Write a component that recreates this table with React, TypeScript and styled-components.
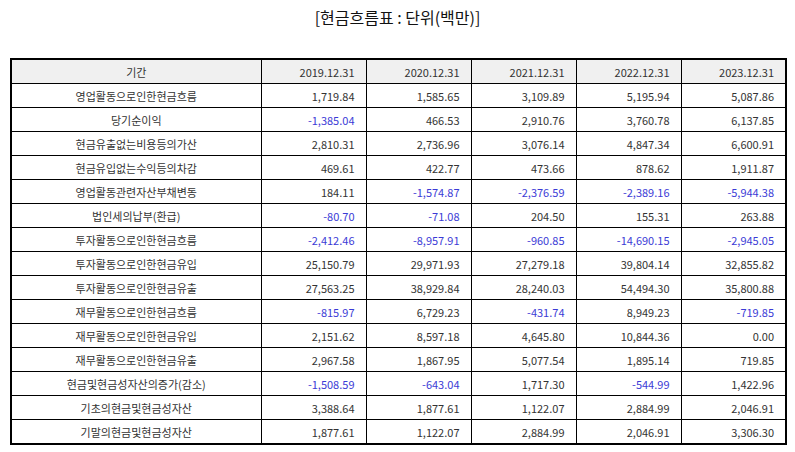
import React from "react";
import styled, { createGlobalStyle } from "styled-components";

const GlobalStyle = createGlobalStyle`
  html, body {
    margin: 0;
    padding: 0;
    background: #fff;
  }
  body {
    font-family: "Noto Sans CJK KR", "Noto Sans", sans-serif;
    color: #222;
  }
`;

const Page = styled.div`
  width: 795px;
  height: 452px;
  padding: 0 10px;
  box-sizing: border-box;
`;

const Title = styled.h2`
  margin: 0;
  height: 58px;
  padding-top: 5px;
  box-sizing: border-box;
  text-align: center;
  font-size: 16px;
  font-weight: 400;
  line-height: 24px;
  color: #111;
`;

const Table = styled.table`
  width: 775px;
  border-collapse: collapse;
  table-layout: fixed;
  font-size: 11px;
  color: #333;
  border: 2px solid #000;
`;

const Col = styled.col<{ $wide?: boolean }>`
  width: ${({ $wide }) => ($wide ? "250px" : "105px")};
`;

const HeadCell = styled.th<{ $label?: boolean }>`
  height: 23px;
  padding: 0 11px;
  border: 1.5px solid #000;
  background: #f0f0f0;
  font-weight: 400;
  text-align: ${({ $label }) => ($label ? "center" : "right")};
  white-space: nowrap;
  line-height: 20px;
`;

const Cell = styled.td<{ $label?: boolean; $neg?: boolean }>`
  height: 23px;
  padding: 0 11px;
  border: 1.5px solid #000;
  background: #fff;
  text-align: ${({ $label }) => ($label ? "center" : "right")};
  color: ${({ $neg }) => ($neg ? "#3b3bd6" : "#333")};
  white-space: nowrap;
  line-height: 20px;
`;

const years = ["2019.12.31", "2020.12.31", "2021.12.31", "2022.12.31", "2023.12.31"];

const rows: [string, string[]][] = [
  ["영업활동으로인한현금흐름", ["1,719.84", "1,585.65", "3,109.89", "5,195.94", "5,087.86"]],
  ["당기순이익", ["-1,385.04", "466.53", "2,910.76", "3,760.78", "6,137.85"]],
  ["현금유출없는비용등의가산", ["2,810.31", "2,736.96", "3,076.14", "4,847.34", "6,600.91"]],
  ["현금유입없는수익등의차감", ["469.61", "422.77", "473.66", "878.62", "1,911.87"]],
  ["영업활동관련자산부채변동", ["184.11", "-1,574.87", "-2,376.59", "-2,389.16", "-5,944.38"]],
  ["법인세의납부(환급)", ["-80.70", "-71.08", "204.50", "155.31", "263.88"]],
  ["투자활동으로인한현금흐름", ["-2,412.46", "-8,957.91", "-960.85", "-14,690.15", "-2,945.05"]],
  ["투자활동으로인한현금유입", ["25,150.79", "29,971.93", "27,279.18", "39,804.14", "32,855.82"]],
  ["투자활동으로인한현금유출", ["27,563.25", "38,929.84", "28,240.03", "54,494.30", "35,800.88"]],
  ["재무활동으로인한현금흐름", ["-815.97", "6,729.23", "-431.74", "8,949.23", "-719.85"]],
  ["재무활동으로인한현금유입", ["2,151.62", "8,597.18", "4,645.80", "10,844.36", "0.00"]],
  ["재무활동으로인한현금유출", ["2,967.58", "1,867.95", "5,077.54", "1,895.14", "719.85"]],
  ["현금및현금성자산의증가(감소)", ["-1,508.59", "-643.04", "1,717.30", "-544.99", "1,422.96"]],
  ["기초의현금및현금성자산", ["3,388.64", "1,877.61", "1,122.07", "2,884.99", "2,046.91"]],
  ["기말의현금및현금성자산", ["1,877.61", "1,122.07", "2,884.99", "2,046.91", "3,306.30"]],
];

export default function App() {
  return (
    <Page>
      <GlobalStyle />
      <Title>[현금흐름표 : 단위(백만)]</Title>
      <Table>
        <colgroup>
          <Col $wide />
          {years.map((y) => (
            <Col key={y} />
          ))}
        </colgroup>
        <thead>
          <tr>
            <HeadCell $label>기간</HeadCell>
            {years.map((y) => (
              <HeadCell key={y}>{y}</HeadCell>
            ))}
          </tr>
        </thead>
        <tbody>
          {rows.map(([label, values]) => (
            <tr key={label}>
              <Cell $label>{label}</Cell>
              {values.map((v, i) => (
                <Cell key={i} $neg={v.startsWith("-")}>
                  {v}
                </Cell>
              ))}
            </tr>
          ))}
        </tbody>
      </Table>
    </Page>
  );
}
